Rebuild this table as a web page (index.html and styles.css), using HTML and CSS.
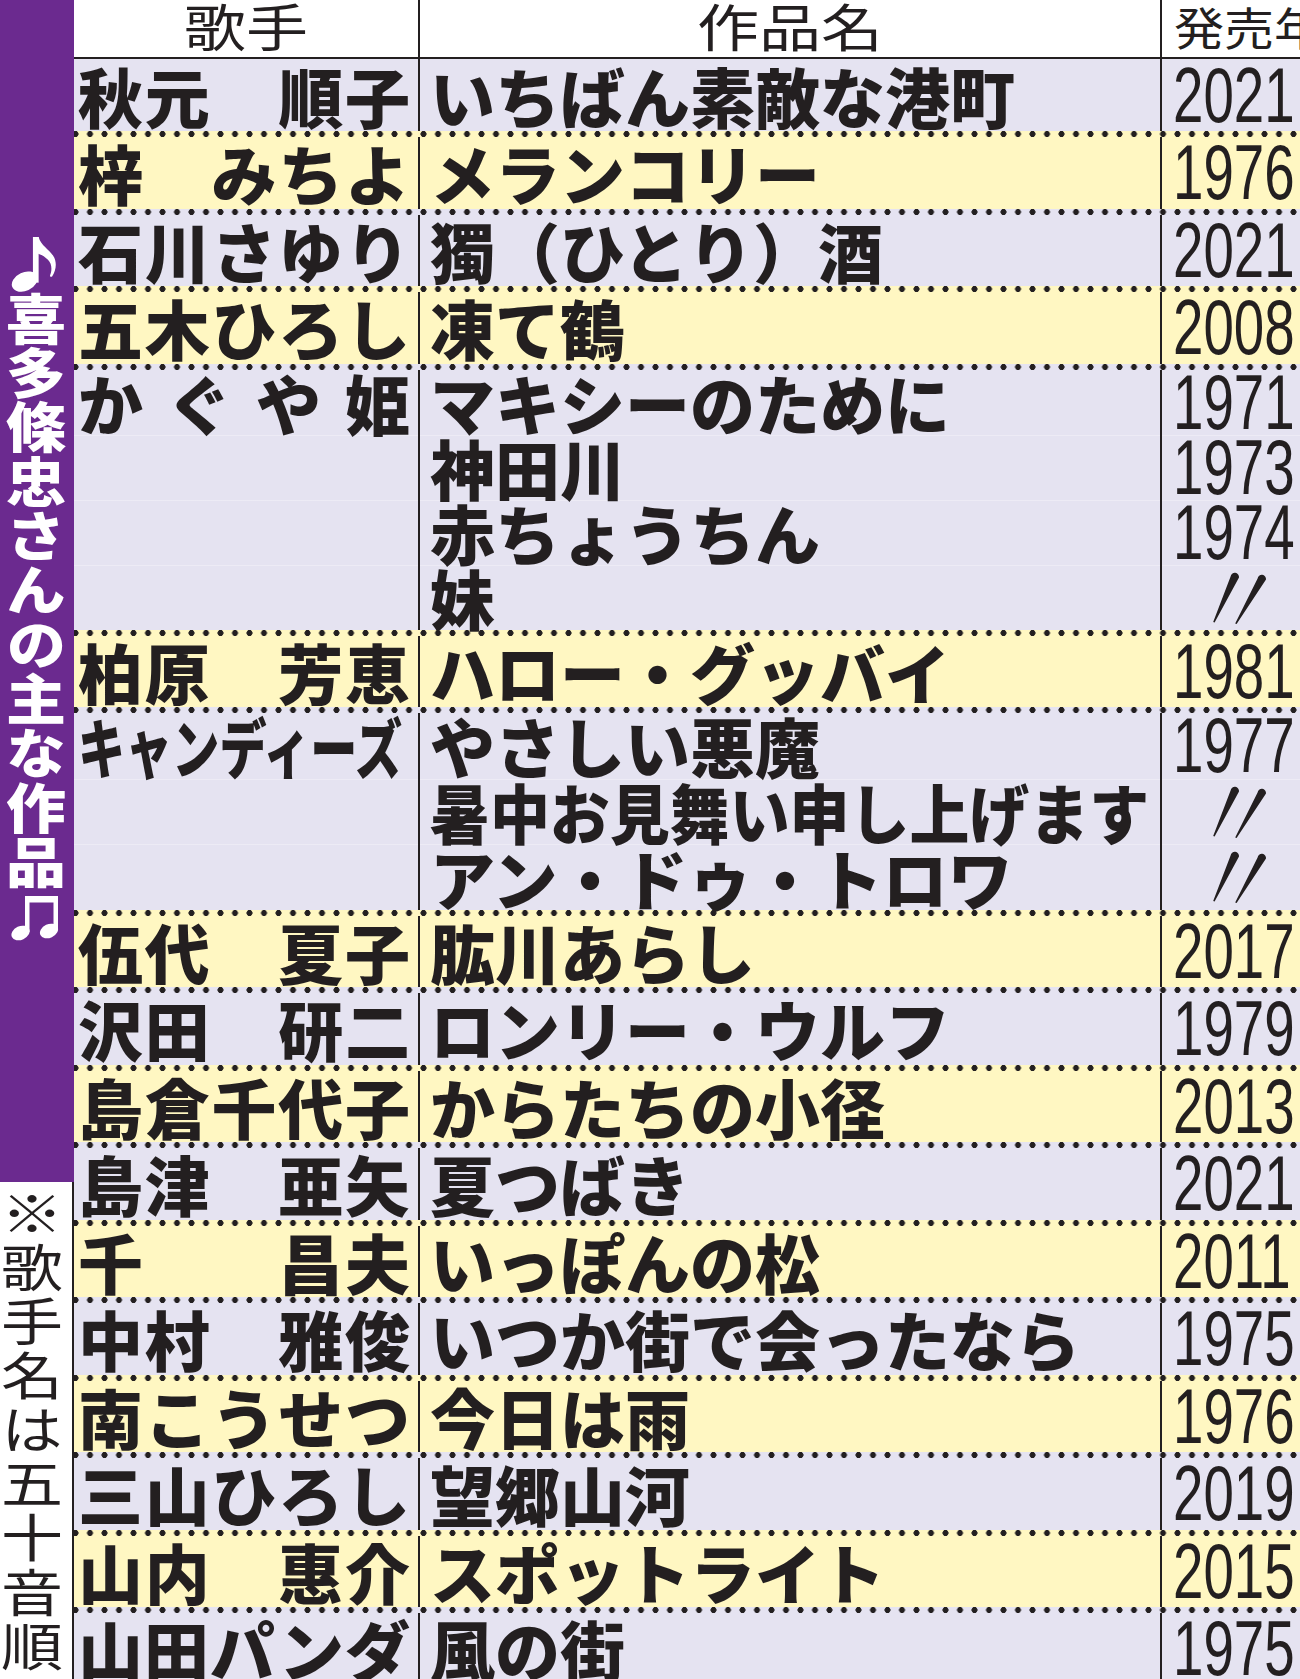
FILE: index.html
```html
<!DOCTYPE html>
<html lang="ja">
<head>
<meta charset="utf-8">
<title>喜多條忠さんの主な作品</title>
<link rel="stylesheet" href="styles.css">
</head>
<body>
<div class="page">
  <aside class="side">
    <div class="side-title">
      <svg class="note-a" viewBox="0 0 46 54" aria-label="♪">
        <ellipse cx="13" cy="44" rx="13" ry="9" transform="rotate(-25 13 44)" fill="#fff"/>
        <rect x="21" y="1" width="5.5" height="44" fill="#fff"/>
        <path d="M21 1 h5.5 c2 8 10 12 14 18 c4 6 3 14 -1 20 c-1 1 -2.5 0 -2 -1 c2 -5 2 -11 -2 -15 c-3 -3 -6 -5 -9.5 -6 z" fill="#fff"/>
      </svg>
      <div class="vtext">喜多條忠さんの主な作品</div>
      <svg class="note-b" viewBox="0 0 48 46" aria-label="♫">
        <polygon points="14,1 47,1 47,7.5 14,7.5" fill="#fff"/>
        <rect x="14" y="1" width="4.5" height="36" fill="#fff"/>
        <rect x="42.5" y="1" width="4.5" height="34" fill="#fff"/>
        <ellipse cx="9.5" cy="38" rx="9.5" ry="6.8" transform="rotate(-25 9.5 38)" fill="#fff"/>
        <ellipse cx="38" cy="36" rx="9.5" ry="6.8" transform="rotate(-25 38 36)" fill="#fff"/>
      </svg>
    </div>
    <div class="side-note">
      <div class="vnote">※歌手名は五十音順</div>
    </div>
  </aside>

  <main class="table">
    <div class="row head">
      <div class="c1"><span class="hd">歌手</span></div>
      <div class="c2"><span class="hd">作品名</span></div>
      <div class="c3"><span class="hd hd-sm">発売年</span></div>
    </div>

    <div class="row r first lav">
      <div class="c1"><div class="line"><span class="name">秋元　順子</span></div></div>
      <div class="c2"><div class="line">いちばん素敵な港町</div></div>
      <div class="c3"><div class="line"><span class="yr">2021</span></div></div>
    </div>
    <div class="row r yel">
      <div class="c1"><div class="line"><span class="name">梓　みちよ</span></div></div>
      <div class="c2"><div class="line">メランコリー</div></div>
      <div class="c3"><div class="line"><span class="yr">1976</span></div></div>
    </div>
    <div class="row r lav">
      <div class="c1"><div class="line"><span class="name">石川さゆり</span></div></div>
      <div class="c2"><div class="line">獨（ひとり）酒</div></div>
      <div class="c3"><div class="line"><span class="yr">2021</span></div></div>
    </div>
    <div class="row r yel">
      <div class="c1"><div class="line"><span class="name">五木ひろし</span></div></div>
      <div class="c2"><div class="line">凍て鶴</div></div>
      <div class="c3"><div class="line"><span class="yr">2008</span></div></div>
    </div>
    <div class="row r lav l4">
      <div class="c1 multi"><div class="line"><span class="name">かぐや姫</span></div></div>
      <div class="c2">
        <div class="line">マキシーのために</div>
        <div class="line">神田川</div>
        <div class="line">赤ちょうちん</div>
        <div class="line">妹</div>
      </div>
      <div class="c3">
        <div class="line"><span class="yr">1971</span></div>
        <div class="line"><span class="yr">1973</span></div>
        <div class="line"><span class="yr">1974</span></div>
        <div class="line"><svg class="ditto" viewBox="0 0 56 52" role="img" aria-label="〃"><path d="M19.6 4.5 A4.2 4.2 0 0 1 28 5.5 L3.6 50.5 L2.2 50 Z"/><path d="M46.6 6.5 A4.2 4.2 0 0 1 55 7.5 L25.6 52 L24.2 51.5 Z"/></svg></div>
      </div>
    </div>
    <div class="row r yel">
      <div class="c1"><div class="line"><span class="name">柏原　芳恵</span></div></div>
      <div class="c2"><div class="line">ハロー・グッバイ</div></div>
      <div class="c3"><div class="line"><span class="yr">1981</span></div></div>
    </div>
    <div class="row r lav l3">
      <div class="c1 multi"><div class="line"><span class="cond cond-name">キャンディーズ</span></div></div>
      <div class="c2">
        <div class="line">やさしい悪魔</div>
        <div class="line"><span class="cond cond-title">暑中お見舞い申し上げます</span></div>
        <div class="line">アン・ドゥ・トロワ</div>
      </div>
      <div class="c3">
        <div class="line"><span class="yr">1977</span></div>
        <div class="line"><svg class="ditto" viewBox="0 0 56 52" role="img" aria-label="〃"><path d="M19.6 4.5 A4.2 4.2 0 0 1 28 5.5 L3.6 50.5 L2.2 50 Z"/><path d="M46.6 6.5 A4.2 4.2 0 0 1 55 7.5 L25.6 52 L24.2 51.5 Z"/></svg></div>
        <div class="line"><svg class="ditto" viewBox="0 0 56 52" role="img" aria-label="〃"><path d="M19.6 4.5 A4.2 4.2 0 0 1 28 5.5 L3.6 50.5 L2.2 50 Z"/><path d="M46.6 6.5 A4.2 4.2 0 0 1 55 7.5 L25.6 52 L24.2 51.5 Z"/></svg></div>
      </div>
    </div>
    <div class="row r yel">
      <div class="c1"><div class="line"><span class="name">伍代　夏子</span></div></div>
      <div class="c2"><div class="line">肱川あらし</div></div>
      <div class="c3"><div class="line"><span class="yr">2017</span></div></div>
    </div>
    <div class="row r lav">
      <div class="c1"><div class="line"><span class="name">沢田　研二</span></div></div>
      <div class="c2"><div class="line">ロンリー・ウルフ</div></div>
      <div class="c3"><div class="line"><span class="yr">1979</span></div></div>
    </div>
    <div class="row r yel">
      <div class="c1"><div class="line"><span class="name">島倉千代子</span></div></div>
      <div class="c2"><div class="line">からたちの小径</div></div>
      <div class="c3"><div class="line"><span class="yr">2013</span></div></div>
    </div>
    <div class="row r lav">
      <div class="c1"><div class="line"><span class="name">島津　亜矢</span></div></div>
      <div class="c2"><div class="line">夏つばき</div></div>
      <div class="c3"><div class="line"><span class="yr">2021</span></div></div>
    </div>
    <div class="row r yel">
      <div class="c1"><div class="line"><span class="name">千　　昌夫</span></div></div>
      <div class="c2"><div class="line">いっぽんの松</div></div>
      <div class="c3"><div class="line"><span class="yr">2011</span></div></div>
    </div>
    <div class="row r lav">
      <div class="c1"><div class="line"><span class="name">中村　雅俊</span></div></div>
      <div class="c2"><div class="line">いつか街で会ったなら</div></div>
      <div class="c3"><div class="line"><span class="yr">1975</span></div></div>
    </div>
    <div class="row r yel">
      <div class="c1"><div class="line"><span class="name">南こうせつ</span></div></div>
      <div class="c2"><div class="line">今日は雨</div></div>
      <div class="c3"><div class="line"><span class="yr">1976</span></div></div>
    </div>
    <div class="row r lav">
      <div class="c1"><div class="line"><span class="name">三山ひろし</span></div></div>
      <div class="c2"><div class="line">望郷山河</div></div>
      <div class="c3"><div class="line"><span class="yr">2019</span></div></div>
    </div>
    <div class="row r yel">
      <div class="c1"><div class="line"><span class="name">山内　惠介</span></div></div>
      <div class="c2"><div class="line">スポットライト</div></div>
      <div class="c3"><div class="line"><span class="yr">2015</span></div></div>
    </div>
    <div class="row r lav">
      <div class="c1"><div class="line"><span class="name">山田パンダ</span></div></div>
      <div class="c2"><div class="line">風の街</div></div>
      <div class="c3"><div class="line"><span class="yr">1975</span></div></div>
    </div>
  </main>
</div>
</body>
</html>
```

FILE: styles.css
```css
html, body {
  margin: 0;
  padding: 0;
  overflow: hidden;
}

body {
  width: 1300px;
  height: 1679px;
  background: #ffffff;
  color: #231f20;
  font-family: "Noto Sans CJK JP", "Noto Sans", sans-serif;
}

.page {
  display: flex;
  width: 1300px;
  height: 1679px;
  overflow: hidden;
}

/* ---------- left side bar ---------- */
.side {
  flex: 0 0 74px;
  display: flex;
  flex-direction: column;
}

.side-title {
  height: 1182px;
  flex: 0 0 1182px;
  box-sizing: border-box;
  padding-top: 236px;
  background: #6b2a8f;
  color: #ffffff;
  display: flex;
  flex-direction: column;
  align-items: center;
}

.note-a {
  display: block;
  width: 48px;
  height: 56px;
  margin-left: -4px;
}

.note-b {
  display: block;
  width: 48px;
  height: 46px;
  margin-top: 7px;
  margin-left: -4px;
}

.side-title .vtext {
  writing-mode: vertical-rl;
  white-space: nowrap;
  height: 596px;
  font-size: 60px;
  font-weight: 900;
  line-height: 1;
  letter-spacing: 0.4px;
  margin-left: -3px;
  transform: scaleY(0.9);
  transform-origin: top center;
}

.side-note {
  flex: 1;
  box-sizing: border-box;
  background: #ffffff;
  border-right: 2px solid #231f20;
  overflow: hidden;
  padding-left: 1px;
}

.vnote {
  writing-mode: vertical-rl;
  white-space: nowrap;
  height: 600px;
  width: 62px;
  font-size: 62px;
  font-weight: 400;
  line-height: 1;
  letter-spacing: 4px;
  margin-top: 6px;
  transform: scaleY(0.82);
  transform-origin: top center;
}

/* ---------- table ---------- */
.table {
  flex: 0 0 1226px;
  overflow: hidden;
}

.row {
  display: grid;
  grid-template-columns: 346px 742px 1fr;
}

.c1, .c2 {
  border-right: 2px solid #231f20;
}

.head {
  height: 59px;
  box-sizing: border-box;
  border-bottom: 2px solid #231f20;
  background: #ffffff;
}

.head .c1, .head .c2 {
  text-align: center;
}

.head .c3 {
  padding-left: 12px;
}

.hd {
  display: inline-block;
  font-size: 62px;
  font-weight: 400;
  line-height: 1;
  margin-top: -1px;
  transform: scaleY(0.82);
  transform-origin: top center;
  white-space: nowrap;
}

.hd-sm {
  font-size: 50px;
  margin-top: 4px;
  transform: scaleY(0.9);
  transform-origin: top left;
}

.r {
  padding-top: 6px;
  background-image: radial-gradient(circle at 7.25px 3px, #231f20 2.7px, rgba(35, 31, 32, 0) 3.3px);
  background-size: 14.5px 6px;
  background-repeat: repeat-x;
  background-position: -5.75px 0;
}

.r.first {
  padding-top: 0;
  background-image: none;
}

.lav { background-color: #e5e3f1; }
.yel { background-color: #fff7c2; }

.line {
  box-sizing: border-box;
  display: flex;
  align-items: center;
  height: 71.5px;
}

.first .line { height: 72px; }
.l4 .line { height: 65px; }
.l3 .line { height: 65.5px; }

.c2 .line + .line,
.c3 .line + .line {
  border-top: 1px solid rgba(255, 255, 255, 0.3);
}

/* faint sub-line rules carried through the singer column */
.l4 .c1.multi {
  background-image: linear-gradient(rgba(255, 255, 255, 0.3), rgba(255, 255, 255, 0.3));
  background-size: 100% 1px;
  background-repeat: repeat-y;
  background-position: 0 65px;
}

.l3 .c1.multi {
  background-image: linear-gradient(rgba(255, 255, 255, 0.3), rgba(255, 255, 255, 0.3)),
                    linear-gradient(rgba(255, 255, 255, 0.3), rgba(255, 255, 255, 0.3));
  background-size: 100% 1px, 100% 1px;
  background-repeat: no-repeat;
  background-position: 0 65.5px, 0 131px;
}

.l4 .c1.multi {
  background-image: linear-gradient(rgba(255, 255, 255, 0.3), rgba(255, 255, 255, 0.3)),
                    linear-gradient(rgba(255, 255, 255, 0.3), rgba(255, 255, 255, 0.3)),
                    linear-gradient(rgba(255, 255, 255, 0.3), rgba(255, 255, 255, 0.3));
  background-size: 100% 1px, 100% 1px, 100% 1px;
  background-repeat: no-repeat;
  background-position: 0 65px, 0 130px, 0 195px;
}

/* singer column */
.c1 .line {
  padding-left: 4px;
}

.name {
  display: block;
  width: 332px;
  font-size: 65px;
  font-weight: 900;
  line-height: 1;
  text-align: justify;
  text-align-last: justify;
}

.cond {
  display: inline-block;
  white-space: nowrap;
  transform-origin: left center;
}

.cond-name {
  font-size: 65px;
  font-weight: 900;
  line-height: 1;
  transform: scaleX(0.725);
}

.cond-title {
  transform: scaleX(0.922);
}

/* title column */
.c2 .line {
  padding-left: 10px;
  font-size: 65px;
  font-weight: 900;
  line-height: 1;
  white-space: nowrap;
}

/* year column */
.c3 .line {
  padding-left: 11px;
  font-family: "Liberation Sans", Arial, sans-serif;
  font-size: 77px;
  font-weight: 400;
  line-height: 1;
  white-space: nowrap;
}

.yr {
  display: inline-block;
  line-height: 1;
  transform: scaleX(0.71);
  transform-origin: left center;
}

.ditto {
  display: block;
  width: 56px;
  height: 52px;
  margin-left: 38px;
  fill: #231f20;
}
```
